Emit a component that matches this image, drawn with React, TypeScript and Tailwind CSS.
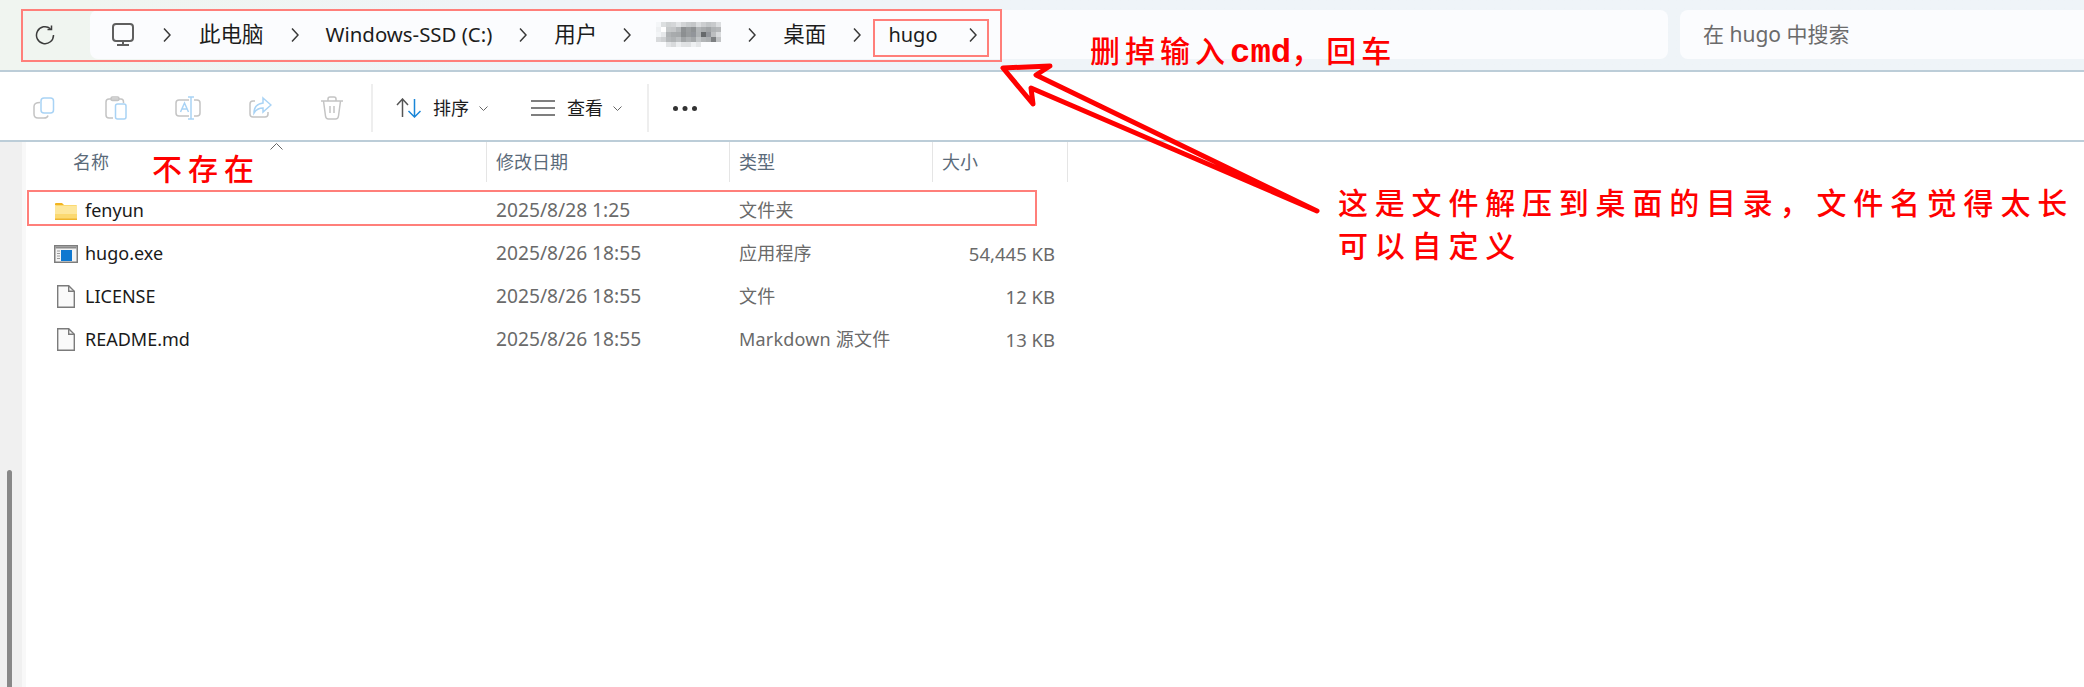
const mosaic = [
  ["#f4f6f8", "#dcdfe0", "#d0d3d4", "#d4d6d8", "#e2e4e6", "#d2d4d6", "#c8cbcd", "#c4c6c8", "#dadcde", "#ccced0", "#c2c5c7", "#c8cacc", "#dcdee0"],
  ["#eef0f2", "#ffffff", "#c6c9ca", "#c4c6c8", "#b4b7b9", "#8e9193", "#9a9d9f", "#8f9294", "#b2b5b7", "#a8abad", "#a0a3a5", "#b0b3b5", "#b6b8ba"],
  ["#f2f4f6", "#e6e8ea", "#b0b3b5", "#a8abad", "#a6a9ab", "#8c8f91", "#989b9d", "#92959a", "#b0b3b5", "#66696b", "#92959a", "#bcbec0", "#d8dadc"],
  ["#d8dadc", "#cfd1d3", "#b6b9bb", "#b0b3b5", "#bcbfc1", "#a2a5a7", "#aeb1b3", "#a4a7a9", "#c2c5c7", "#b2b5b7", "#acafb1", "#7c7f81", "#c2c4c6"],
  ["#fbfcfe", "#fbfcfe", "#e2e4e6", "#d8dadc", "#eceef0", "#e0e2e4", "#dfe1e3", "#eef0f2", "#e4e6e8", "#fbfcfe", "#fbfcfe", "#fbfcfe", "#fbfcfe"],
];

const rows = [
  { name: "fenyun", date: "2025/8/28 1:25", type: "文件夹", size: "", icon: "folder" },
  { name: "hugo.exe", date: "2025/8/26 18:55", type: "应用程序", size: "54,445 KB", icon: "exe" },
  { name: "LICENSE", date: "2025/8/26 18:55", type: "文件", size: "12 KB", icon: "file" },
  { name: "README.md", date: "2025/8/26 18:55", type: "Markdown 源文件", size: "13 KB", icon: "file" },
];

function Chevron() {
  return (
    <svg width="8" height="16" viewBox="0 0 8 16" fill="none" stroke="#3a3a3a" strokeWidth="1.5">
      <path d="M1 1.5 7 8 1 14.5" />
    </svg>
  );
}

function Caret() {
  return (
    <svg width="9" height="5" viewBox="0 0 9 5" fill="none" stroke="#666" strokeWidth="1">
      <path d="M.5.5 4.5 4.5 8.5.5" />
    </svg>
  );
}

function FileIcon({ kind }: { kind: string }) {
  if (kind === "folder") {
    return (
      <svg width="24" height="18" viewBox="0 0 24 18">
        <path d="M1 2q0-1 1-1h6l2 2h-9z" fill="#f2b420" />
        <rect x="1" y="3" width="22" height="15" rx="1" fill="#fbd971" />
        <rect x="1" y="4" width="22" height="8" fill="#fde79c" />
        <rect x="1" y="16.5" width="22" height="1.5" fill="#eeb52e" />
      </svg>
    );
  }
  if (kind === "exe") {
    return (
      <svg width="24" height="18" viewBox="0 0 24 18">
        <rect x=".75" y=".75" width="22.5" height="16.5" fill="#f3f3f3" stroke="#7d7d7d" strokeWidth="1.5" />
        <rect x="1.5" y="1.5" width="21" height="2" fill="#8b8b8b" />
        <path d="M3 6h3M3 8.5h3M3 11h3M3 13.5h3" stroke="#9a9a9a" strokeWidth="1" />
        <rect x="7" y="5" width="11" height="11" fill="#0f78d0" />
      </svg>
    );
  }
  return (
    <svg width="24" height="23" viewBox="0 0 24 23" fill="#fafafa" stroke="#7b7b7b" strokeWidth="1.4">
      <path d="M3.7.7h11l5.6 5.6v16h-16.600z" />
      <path d="M14.700.7v5.600h5.600" fill="none" />
    </svg>
  );
}

function Cell({ width, className, children }: { width: string; className: string; children?: React.ReactNode }) {
  return <div className={`${width} ${className} flex shrink-0 items-center`}>{children}</div>;
}

export default function App() {
  return (
    <div className="relative h-[687px] w-[2084px] overflow-hidden bg-white font-['Noto_Sans','Noto_Sans_CJK_SC',sans-serif]">
      {/* Address row */}
      <div className="flex h-[72px] items-start border-b-2 border-[#bccdd8] bg-gradient-to-r from-[#f0f5f0] from-[4%] to-[#eff4f8] to-[25%] pt-[10px]">
        <div className="flex h-[49px] w-[90px] shrink-0 items-center pl-[35px]">
          <svg width="20" height="20" viewBox="0 0 20 20" fill="none" stroke="#3c3c3c" strokeWidth="1.5">
            <path d="M15.500 3.700A8.500 8.500 0 1 0 18.500 10" />
            <path d="M16.500 .5v4h-4" />
          </svg>
        </div>
        <div className="flex h-[49px] w-[1578px] shrink-0 items-center gap-[27px] rounded-lg bg-[#fbfcfe] pl-[21px] text-[20px] text-[#1c1c1c]">
          <svg width="24" height="23" viewBox="0 0 24 23" fill="none" stroke="#5f5f5f" strokeWidth="2">
            <rect x="2" y="1" width="20" height="17" rx="3" />
            <path d="M12 18v4M6 22h12" />
          </svg>
          <span className="ml-[1px]">
            <Chevron />
          </span>
          <span className="ml-[1px] text-[21.500px]">此电脑</span>
          <Chevron />
          <span className="text-[20.400px]">Windows-SSD (C:)</span>
          <Chevron />
          <span className="text-[21.500px]">用户</span>
          <span className="-ml-[1px]">
            <Chevron />
          </span>
          <svg className="-ml-[2px]" width="65" height="25" viewBox="0 0 65 25">
            {mosaic.map((line, y) =>
              line.map((c, x) => <rect key={`${x}-${y}`} x={x * 5} y={y * 5} width="5" height="5" fill={c} />),
            )}
          </svg>
          <Chevron />
          <span className="text-[21.500px]">桌面</span>
          <Chevron />
          <span>hugo</span>
          <span className="ml-[4px]">
            <Chevron />
          </span>
        </div>
        <div className="ml-[12px] flex h-[49px] flex-1 items-center rounded-l-lg bg-[#fbfcfe] pl-[23px] text-[21px] text-[#6b6b6b]">
          在 hugo 中搜索
        </div>
      </div>

      {/* Command bar */}
      <div className="flex h-[70px] items-center border-b-2 border-[#bccdd8] pl-[8px] pt-[4px] text-[18px] text-[#1c1c1c]">
        <div className="flex w-[72px] justify-center">
          <svg width="24" height="24" viewBox="0 0 24 24" fill="none" strokeWidth="1.5">
            <path d="M8 6.500Q2 6.500 2 10.500v7.500q0 4 4 4h6q3.500 0 4-2.500" stroke="#c4c4c4" />
            <rect x="9" y="2" width="12.500" height="15" rx="3" stroke="#a9d3f5" />
          </svg>
        </div>
        <div className="flex w-[72px] justify-center">
          <svg width="24" height="24" viewBox="0 0 24 24" fill="none" strokeWidth="1.5">
            <path d="M9 22H5q-3 0-3-3V6q0-3 3-3h12q2.500 0 2.500 3v1" stroke="#c4c4c4" />
            <rect x="7" y="1" width="8" height="3.500" rx="1.500" stroke="#c4c4c4" />
            <rect x="11.500" y="8" width="10.500" height="15" rx="2" stroke="#a9d3f5" />
          </svg>
        </div>
        <div className="flex w-[72px] justify-center">
          <svg width="26" height="24" viewBox="0 0 26 24" fill="none" strokeWidth="1.5">
            <path d="M14 4H4Q1 4 1 7v10q0 3 3 3h10M19 4h3q3 0 3 3v10q0 3-3 3h-3" stroke="#c4c4c4" />
            <path d="M13 1h6M16 1v22M13 23h6M5.500 16 9.500 7l4 9M7 13h5" stroke="#a9d3f5" />
          </svg>
        </div>
        <div className="flex w-[72px] justify-center">
          <svg width="24" height="24" viewBox="0 0 24 24" fill="none" strokeWidth="1.5">
            <path d="M7 5H5Q2 5 2 8v10q0 3 3 3h12q3 0 3-3v-2" stroke="#c4c4c4" />
            <path d="M15 2l8 7-8 7v-4q-6 0-9 5 0-9 9-10z" stroke="#a9d3f5" />
          </svg>
        </div>
        <div className="flex w-[72px] justify-center">
          <svg width="24" height="24" viewBox="0 0 24 24" fill="none" stroke="#c4c4c4" strokeWidth="1.5">
            <path d="M1 5h22M8 5V3q0-2 2-2h4q2 0 2 2v2M3.500 5 5.500 20q.3 3 3 3h7q2.700 0 3-3L20.500 5M10 10v7M14 10v7" />
          </svg>
        </div>
        <div className="ml-[3px] h-[48px] w-[2px] bg-[#eeeeee]" />
        <div className="ml-[23px] flex items-center">
          <svg width="25" height="20" viewBox="0 0 25 20" fill="none" strokeWidth="1.5">
            <path d="M6.500 19V1M1 7l5.500-6L12 7" stroke="#555" />
            <path d="M18.500 1v18M12.500 13l6 6 6-6" stroke="#1a86d8" />
          </svg>
          <span className="ml-[12px]">排序</span>
          <span className="ml-[10px] flex">
            <Caret />
          </span>
        </div>
        <div className="ml-[43px] flex items-center">
          <svg width="24" height="16" viewBox="0 0 24 16" fill="none" stroke="#555" strokeWidth="1.500">
            <path d="M0 1h24M0 8h24M0 15h24" />
          </svg>
          <span className="ml-[12px]">查看</span>
          <span className="ml-[10px] flex">
            <Caret />
          </span>
        </div>
        <div className="ml-[25px] h-[48px] w-[2px] bg-[#eeeeee]" />
        <svg className="ml-[24px]" width="24" height="5" viewBox="0 0 24 5" fill="#333">
          <circle cx="2.500" cy="2.500" r="2.500" />
          <circle cx="12" cy="2.500" r="2.500" />
          <circle cx="21.500" cy="2.500" r="2.500" />
        </svg>
      </div>

      {/* File list with the gray strip and scrollbar on its left */}
      <div className="flex h-[545px]">
        <div className="flex w-[22px] shrink-0 flex-col bg-[#f0f0f0] pl-[7px] pt-[328px]">
          <div className="w-[5px] flex-1 rounded-t-sm bg-[#888888]" />
        </div>
        <div className="w-[4px] shrink-0 bg-[#f8f8f8]" />
        <div className="flex-1">
          <div className="mb-[7px] flex h-[40px] text-[18px] text-[#5b6b7a]">
            <Cell width="w-[461px]" className="border-r border-[#e5e5e5] pl-[47px]">
              名称
            </Cell>
            <Cell width="w-[243px]" className="border-r border-[#e5e5e5] pl-[9px]">
              修改日期
            </Cell>
            <Cell width="w-[203px]" className="border-r border-[#e5e5e5] pl-[9px]">
              类型
            </Cell>
            <Cell width="w-[135px]" className="border-r border-[#e5e5e5] pl-[9px]">
              大小
            </Cell>
          </div>
          {rows.map((row) => (
            <div key={row.name} className="flex h-[43px] text-[18px] text-[#6a6a6a]">
              <Cell width="w-[461px]" className="pl-[28px] text-[#1a1a1a]">
                <span className="flex w-[24px] justify-center">
                  <FileIcon kind={row.icon} />
                </span>
                <span className="ml-[7px]">{row.name}</span>
              </Cell>
              <Cell width="w-[243px]" className="pl-[9px] text-[19.200px]">
                {row.date}
              </Cell>
              <Cell width="w-[203px]" className="pl-[9px] tracking-[0.2px]">
                {row.type}
              </Cell>
              <Cell width="w-[135px]" className="justify-end pr-[13px] text-[18.500px]">
                {row.size}
              </Cell>
            </div>
          ))}
        </div>
      </div>

      {/* Sort caret over the header */}
      <svg className="absolute left-[270px] top-[143px]" width="13" height="7" viewBox="0 0 13 7" fill="none" stroke="#666" strokeWidth="1">
        <path d="M.5 6.500 6.500.5l6 6" />
      </svg>

      {/* Screenshot annotations */}
      <div className="absolute left-[21px] top-[9px] h-[53px] w-[981px] border-2 border-[#ff7f7a]" />
      <div className="absolute left-[873px] top-[19px] h-[38px] w-[116px] border-2 border-[#ff7f7a]" />
      <div className="absolute left-[27px] top-[190px] h-[36px] w-[1010px] border-2 border-[#ff7f7a]" />

      <svg className="absolute left-[995px] top-[60px]" width="330" height="160" viewBox="995 60 330 160" fill="none" stroke="#ff0000" strokeWidth="5" strokeLinejoin="round">
        <path d="M1003 68 1050 66 1036 75 1317 211 1031 88 1033 104z" />
      </svg>

      <div className="absolute left-[1090px] top-[28px] text-[30px] font-medium leading-[46px] tracking-[5px] text-[#ff0000]">
        删掉输入<span className="font-['Liberation_Mono',monospace] text-[34px] font-bold tracking-[0px]">cmd</span>，回车
      </div>
      <div className="absolute left-[152px] top-[149px] text-[30px] font-medium leading-[40px] tracking-[6px] text-[#ff0000]">不存在</div>
      <div className="absolute left-[1338px] top-[181px] text-[30px] font-medium leading-[43px] tracking-[6.800px] text-[#ff0000]">
        <div>这是文件解压到桌面的目录，文件名觉得太长</div>
        <div>可以自定义</div>
      </div>
    </div>
  );
}
